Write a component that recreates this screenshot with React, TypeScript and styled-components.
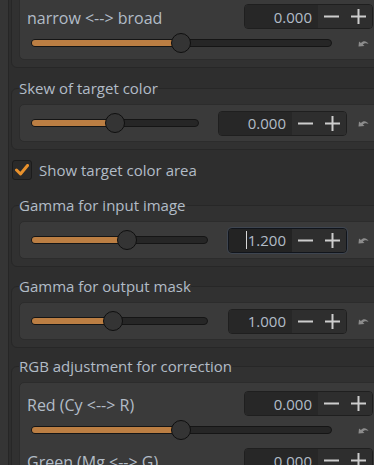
import React from 'react';
import styled, { createGlobalStyle } from 'styled-components';

const GlobalStyle = createGlobalStyle`
  html, body {
    margin: 0;
    padding: 0;
    background: #2e2e2e;
    overflow: hidden;
  }
  body {
    font-family: 'Open Sans', 'Noto Sans', sans-serif;
    color: #b2bcc7;
  }
`;

function ResetIcon() {
  return (
    <svg width='11' height='8' viewBox='0 0 11 8'>
      <path
        d='M0.5 7.5 L1 2.5 L3 4 C5 1.5 8.5 1.5 10.5 5 C8.5 3.8 6.5 3.8 4.8 5.6 L6.5 7 Z'
        fill='#8c8c8c'
      />
    </svg>
  );
}

function MinusIcon() {
  return (
    <svg width='15' height='15' viewBox='0 0 15 15'>
      <path d='M0 7.5 H15' stroke='#cdcdcd' strokeWidth='2' />
    </svg>
  );
}

function PlusIcon() {
  return (
    <svg width='15' height='15' viewBox='0 0 15 15'>
      <path d='M0 7.5 H15 M7.5 0 V15' stroke='#cdcdcd' strokeWidth='2' />
    </svg>
  );
}

interface SpinProps {
  value: string;
  entry: number;
  focused?: boolean;
}

function SpinButton({ value, entry, focused }: SpinProps) {
  return (
    <Spin $focused={focused}>
      <Entry $w={entry} $focused={focused}>
        {focused && <Caret />}
        {value}
      </Entry>
      <StepBtn>
        <MinusIcon />
      </StepBtn>
      <StepBtn>
        <PlusIcon />
      </StepBtn>
    </Spin>
  );
}

function Slider({ pct, gap }: { pct: number; gap: number }) {
  return (
    <Track $gap={gap}>
      <Fill style={{ width: `${pct}%` }} />
      <Knob style={{ left: `${pct}%` }} />
    </Track>
  );
}

interface WideProps {
  label: string;
  value: string;
  pct: number;
}

function WideAdjuster({ label, value, pct }: WideProps) {
  return (
    <Adjuster>
      <LabelRow>
        <AdjLabel>{label}</AdjLabel>
        <SpinButton value={value} entry={73} />
      </LabelRow>
      <SliderRow>
        <Slider pct={pct} gap={15} />
        <ResetCol>
          <ResetIcon />
        </ResetCol>
      </SliderRow>
    </Adjuster>
  );
}

interface CompactProps {
  title: string;
  value: string;
  pct: number;
  entry: number;
  gap: number;
  focused?: boolean;
  mb?: number;
}

function CompactFrame({ title, value, pct, entry, gap, focused, mb }: CompactProps) {
  return (
    <Frame $mb={mb}>
      <Legend>{title}</Legend>
      <CompactBox>
        <Slider pct={pct} gap={gap} />
        <SpinButton value={value} entry={entry} focused={focused} />
        <ResetCol>
          <ResetIcon />
        </ResetCol>
      </CompactBox>
    </Frame>
  );
}

export default function App() {
  return (
    <>
      <GlobalStyle />
      <Page>
        <SideStrip />
        <Panel>
          <Frame $first>
            <Box>
              <WideAdjuster label='narrow <--> broad' value='0.000' pct={49.8} />
            </Box>
          </Frame>

          <CompactFrame title='Skew of target color' value='0.000' pct={49.7} entry={73} gap={19} />

          <CheckRow>
            <CheckBox>
              <svg width='14' height='12' viewBox='0 0 14 12'>
                <polyline
                  points='1.5,6 5.5,10 12.5,1.5'
                  fill='none'
                  stroke='#e8912c'
                  strokeWidth='3'
                  strokeLinecap='round'
                  strokeLinejoin='round'
                />
              </svg>
            </CheckBox>
            <CheckLabel>Show target color area</CheckLabel>
          </CheckRow>

          <CompactFrame
            title='Gamma for input image'
            value='1.200'
            pct={54}
            entry={63}
            gap={20}
            focused
            mb={9}
          />

          <CompactFrame
            title='Gamma for output mask'
            value='1.000'
            pct={46}
            entry={63}
            gap={20}
            mb={8}
          />

          <Frame>
            <Legend>RGB adjustment for correction</Legend>
            <Box>
              <WideAdjuster label='Red (Cy <--> R)' value='0.000' pct={49.8} />
              <WideAdjuster label='Green (Mg <--> G)' value='0.000' pct={49.8} />
            </Box>
          </Frame>
        </Panel>
      </Page>
    </>
  );
}

const Page = styled.div`
  display: flex;
  height: 465px;
  overflow: hidden;
`;

const SideStrip = styled.div`
  flex: none;
  width: 8px;
  background: #353535;
  border-right: 1px solid #262626;
`;

const Panel = styled.div`
  flex: none;
  width: 382px;
  box-sizing: border-box;
  padding-left: 2px;
  display: flex;
  flex-direction: column;
`;

const Frame = styled.fieldset<{ $first?: boolean; $mb?: number }>`
  margin: ${(p) => (p.$first ? -12 : 0)}px 0 ${(p) => p.$mb ?? 10}px;
  padding: 0 8px 7px 7px;
  min-width: 0;
  border: 1px solid #272727;
  border-radius: 6px;
  background: #313131;
`;

const Legend = styled.legend`
  padding: 0;
  margin-left: 0;
  font-size: 15px;
  line-height: 20px;
  color: #b2bcc7;
`;

const Box = styled.div`
  margin-top: 6px;
  padding: 8px 8px 2px 7px;
  display: flex;
  flex-direction: column;
  gap: 4px;
  background: #3a3a3a;
  border: 1px solid #2c2c2c;
  border-radius: 5px;
`;

const CompactBox = styled.div`
  margin-top: 6px;
  height: 36px;
  padding: 0 8px 0 7px;
  display: flex;
  align-items: center;
  background: #3a3a3a;
  border: 1px solid #2c2c2c;
  border-radius: 5px;
`;

const Adjuster = styled.div`
  display: flex;
  flex-direction: column;
`;

const LabelRow = styled.div`
  display: flex;
  align-items: center;
  justify-content: space-between;
  height: 25px;
`;

const AdjLabel = styled.span`
  font-size: 16px;
  padding-top: 2px;
`;

const SliderRow = styled.div`
  display: flex;
  align-items: center;
  height: 28px;
`;

const Track = styled.div<{ $gap: number }>`
  position: relative;
  flex: 1;
  height: 6px;
  margin: 0 ${(p) => p.$gap}px 0 4px;
  background: #262626;
  border: 1px solid #151515;
  border-radius: 4px;
`;

const Fill = styled.div`
  height: 100%;
  background: #bb7e43;
  border-radius: 3px 0 0 3px;
`;

const Knob = styled.div`
  position: absolute;
  top: 50%;
  width: 18px;
  height: 18px;
  transform: translate(-50%, -50%);
  border-radius: 50%;
  background: #343434;
  border: 1px solid #0f0f0f;
`;

const ResetCol = styled.div`
  flex: none;
  width: 26px;
  box-sizing: border-box;
  padding-left: 11px;
  display: flex;
  align-items: center;
`;

const Spin = styled.div<{ $focused?: boolean }>`
  flex: none;
  display: flex;
  height: 25px;
  box-sizing: border-box;
  border: 1px solid ${(p) => (p.$focused ? '#11151c' : '#1f1f1f')};
  box-shadow: ${(p) => (p.$focused ? '0 0 0 1px #3e4550' : 'none')};
  border-radius: 4px;
  overflow: hidden;
`;

const Entry = styled.div<{ $w: number; $focused?: boolean }>`
  width: ${(p) => p.$w}px;
  box-sizing: border-box;
  padding-right: 6px;
  display: flex;
  align-items: center;
  justify-content: flex-end;
  background: ${(p) => (p.$focused ? '#232323' : '#272727')};
  font-size: 15px;
  color: #b2bcc7;
`;

const Caret = styled.span`
  width: 1px;
  height: 18px;
  margin-right: 1px;
  background: #d8d8d8;
`;

const StepBtn = styled.div`
  width: 27px;
  display: flex;
  align-items: center;
  justify-content: center;
  background: #2e2e2e;
`;

const CheckRow = styled.div`
  display: flex;
  align-items: center;
  gap: 7px;
  height: 24px;
  margin: 0 0 15px 1px;
`;

const CheckBox = styled.div`
  width: 20px;
  height: 20px;
  box-sizing: border-box;
  display: flex;
  align-items: center;
  justify-content: center;
  background: #2a2a2a;
  border: 1px solid #1c1c1c;
  border-radius: 3px;
`;

const CheckLabel = styled.span`
  font-size: 15px;
`;
